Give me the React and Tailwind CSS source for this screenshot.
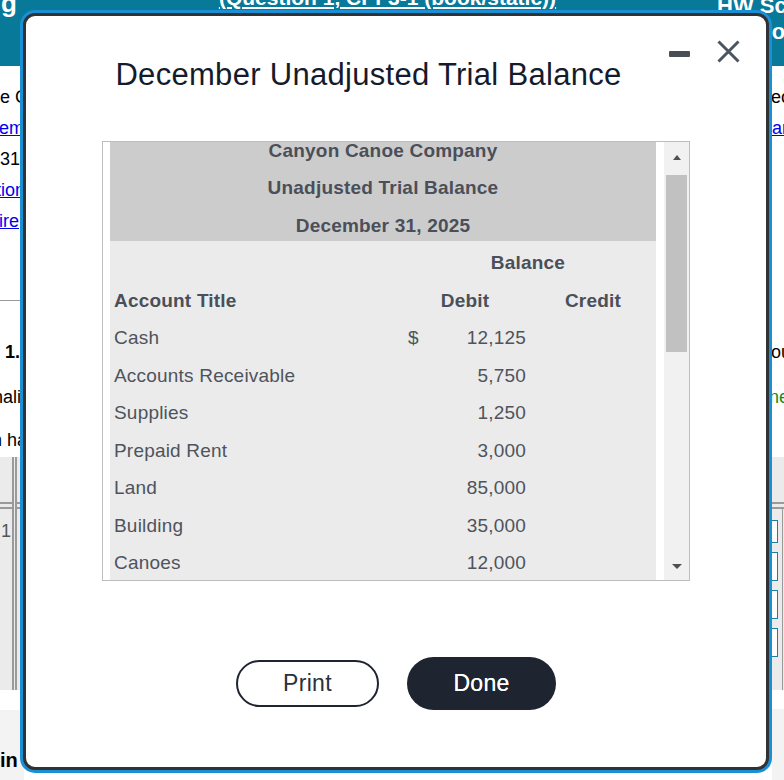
import React from "react";

const rows = [
  ["Cash", "$", "12,125"],
  ["Accounts Receivable", "", "5,750"],
  ["Supplies", "", "1,250"],
  ["Prepaid Rent", "", "3,000"],
  ["Land", "", "85,000"],
  ["Building", "", "35,000"],
  ["Canoes", "", "12,000"],
  ["Accounts Payable", "", ""],
  ["Unearned Revenue", "", ""],
];

function Background() {
  return (
    <div className="absolute inset-0 flex flex-col">
      {/* header band */}
      <div className="h-[66px] bg-[#09799a] flex text-white font-bold overflow-hidden">
        <div className="w-[203px] text-[26px] leading-[30px] mt-[-12px] pl-[1px]">g</div>
        <div className="w-[369px] text-center whitespace-nowrap text-[21px] leading-[24px] mt-[-14px] underline">
          (Question 1, CPF3-1 (book/static))
        </div>
        <div className="flex-1" />
        <div className="w-[67px] overflow-hidden whitespace-nowrap text-[22px] leading-[26px] mt-[-7px]">
          <div>HW Score</div>
          <div className="pl-[40px] mt-[0px]">Poi</div>
        </div>
      </div>
      {/* body */}
      <div className="flex-1 flex justify-between text-[18px] text-black">
        {/* left strip */}
        <div className="w-[24px] overflow-hidden whitespace-nowrap flex flex-col">
          <div className="pt-[16px]">
            <div className="h-[31px] leading-[31px]">e Canyon</div>
            <div className="h-[31px] leading-[31px] text-[#0000ee] underline ml-[-1px]">ement</div>
            <div className="h-[31px] leading-[31px]">31</div>
            <div className="h-[31px] leading-[31px] text-[#0000ee] underline ml-[-4px]">tion</div>
            <div className="h-[31px] leading-[31px] text-[#0000ee] underline ml-[-1px]">ire</div>
          </div>
          <div className="mt-[63px] h-px bg-[#9a9a9a]" />
          <div className="mt-[36px] h-[31px] leading-[31px] font-bold pl-[5px]">1.</div>
          <div className="mt-[14px] h-[31px] leading-[31px] ml-[-7px]">nali</div>
          <div className="mt-[12px] h-[31px] leading-[31px] ml-[-8px]">h ha</div>
          <div className="mt-[1px] h-[233px] bg-[#ebebeb] flex">
            <div className="w-[12px] flex flex-col">
              <div className="h-[45px]" />
              <div className="h-[2px] bg-[#9a9a9a]" />
              <div className="h-[3px]" />
              <div className="h-[2px] bg-[#9a9a9a]" />
              <div className="pt-[12px] text-[18px] text-[#555] leading-[20px] pl-[1px]">1</div>
            </div>
            <div className="w-[2px] bg-[#9a9a9a]" />
            <div className="w-[1px]" />
            <div className="w-[2px] bg-[#9a9a9a]" />
            <div className="flex-1 flex flex-col">
              <div className="h-[45px]" />
              <div className="h-[2px] bg-[#9a9a9a]" />
              <div className="h-[3px]" />
              <div className="h-[2px] bg-[#9a9a9a]" />
            </div>
          </div>
          <div className="h-[20px] bg-white" />
          <div className="flex-1 bg-[#f3f3f3] font-bold text-[20px] leading-[24px] pt-[38px]">in</div>
        </div>
        {/* right strip */}
        <div className="w-[12px] overflow-hidden whitespace-nowrap flex flex-col">
          <div className="pt-[16px]">
            <div className="h-[31px] leading-[31px] ml-[-1px]">ec</div>
            <div className="h-[31px] leading-[31px] text-[#0000ee] underline">ar</div>
          </div>
          <div className="h-[193px]" />
          <div className="h-[31px] leading-[31px] ml-[-1px]">ou</div>
          <div className="mt-[14px] h-[31px] leading-[31px] text-[#1a8a1a] ml-[-3px]">ne</div>
          <div className="mt-[44px] h-[233px] bg-[#ebebeb] flex flex-col">
            <div className="h-[45px]" />
            <div className="h-[2px] bg-[#9a9a9a]" />
            <div className="h-[3px]" />
            <div className="h-[2px] bg-[#9a9a9a]" />
            <div className="flex-1 flex">
              <div className="w-[10px] flex flex-col">
                <div className="h-[11px]" />
                <div className="h-[23px] w-[6px] bg-white border-[1.5px] border-l-0 border-[#1e7ea0]" />
                <div className="h-[9px]" />
                <div className="h-[29px] w-[6px] bg-white border-[1.5px] border-l-0 border-[#1e7ea0]" />
                <div className="h-[9px]" />
                <div className="h-[29px] w-[6px] bg-white border-[1.5px] border-l-0 border-[#1e7ea0]" />
                <div className="h-[9px]" />
                <div className="h-[29px] w-[6px] bg-white border-[1.5px] border-l-0 border-[#1e7ea0]" />
              </div>
              <div className="w-[1px] bg-[#9a9a9a]" />
            </div>
          </div>
          <div className="h-[19px] bg-white" />
          <div className="flex-1 bg-[#f3f3f3]" />
        </div>
      </div>
    </div>
  );
}

function Row({ children, className = "" }) {
  return (
    <div className={"h-[37.5px] flex items-end pb-[5.5px] text-[19px] tracking-[0.2px] leading-[21px] whitespace-nowrap " + className}>
      {children}
    </div>
  );
}

function TablePanel() {
  return (
    <div className="w-[588px] h-[440px] border border-[#bdbdbd] flex bg-white">
      <div className="w-[7px]" />
      <div className="w-[546px] overflow-hidden">
        <div className="mt-[-13.5px]">
          <div className="bg-[#cccccc] text-[#4a4f59] font-bold">
            <Row className="justify-center">Canyon Canoe Company</Row>
            <Row className="justify-center">Unadjusted Trial Balance</Row>
            <Row className="justify-center">December 31, 2025</Row>
          </div>
          <div className="bg-[#ebebeb] text-[#4e535d]">
            <Row className="font-bold text-[#4a4f59]">
              <div className="w-[290px]" />
              <div className="flex-1 text-center">Balance</div>
            </Row>
            <Row className="font-bold text-[#4a4f59]">
              <div className="w-[290px] pl-[4px]">Account Title</div>
              <div className="w-[130px] text-center">Debit</div>
              <div className="flex-1 text-center">Credit</div>
            </Row>
            {rows.map(([name, sign, amt]) => (
              <Row key={name}>
                <div className="w-[290px] pl-[4px]">{name}</div>
                <div className="w-[130px] flex justify-between pl-[8px] pr-[4px]">
                  <span>{sign}</span>
                  <span>{amt}</span>
                </div>
                <div className="flex-1" />
              </Row>
            ))}
          </div>
        </div>
      </div>
      <div className="w-[8px]" />
      {/* scrollbar */}
      <div className="w-[25px] bg-[#f1f1f1] flex flex-col items-center">
        <div className="h-[31px] flex items-center justify-center">
          <div className="w-0 h-0 border-l-[4.5px] border-r-[4.5px] border-b-[5px] border-l-transparent border-r-transparent border-b-[#505050]" />
        </div>
        <div className="mt-[2px] w-[21px] h-[177px] bg-[#c1c1c1]" />
        <div className="flex-1" />
        <div className="h-[16px] flex items-start justify-center">
          <div className="w-0 h-0 border-l-[5px] border-r-[5px] border-t-[5px] border-l-transparent border-r-transparent border-t-[#505050]" />
        </div>
      </div>
    </div>
  );
}

function Modal() {
  return (
    <div className="absolute left-[20px] top-[10px] w-[752px] h-[763px] rounded-[15px] border-[3px] border-[#1b8fd3] bg-[#1b8fd3]">
      <div className="relative w-full h-full rounded-[12px] border-[3px] border-[#303234] bg-white flex flex-col items-center">
        {/* window controls */}
        <div className="absolute top-[24px] right-[26px] flex items-start gap-[27px]">
          <div className="mt-[11px] w-[21px] h-[6px] rounded-[1px] bg-[#4a4e55]" />
          <svg width="23" height="23" viewBox="0 0 23 23" className="text-[#4b5560]">
            <path d="M1.5 1.5 L21.5 21.5 M21.5 1.5 L1.5 21.5" stroke="currentColor" strokeWidth="3" strokeLinecap="butt" />
          </svg>
        </div>
        <div className="w-full pr-[55px] mt-[40px] text-center text-[31px] tracking-[0.3px] leading-[37px] text-[#131b2d] whitespace-nowrap">
          December Unadjusted Trial Balance
        </div>
        <div className="mt-[48px]">
          <TablePanel />
        </div>
        <div className="mt-[76px] flex items-center gap-[28px]">
          <button className="w-[143px] h-[47px] rounded-full border-[2.5px] border-[#1e2430] bg-white text-[23px] tracking-[0.3px] text-[#2b303b]">
            Print
          </button>
          <button className="w-[149px] h-[53px] rounded-full bg-[#1e2430] text-white text-[23px] tracking-[0.3px] [text-shadow:0_0_0.4px_#fff]">
            Done
          </button>
        </div>
      </div>
    </div>
  );
}

export default function App() {
  return (
    <div className="relative w-[784px] h-[780px] overflow-hidden bg-white font-['Liberation_Sans',Arial,sans-serif]">
      <Background />
      <Modal />
    </div>
  );
}
